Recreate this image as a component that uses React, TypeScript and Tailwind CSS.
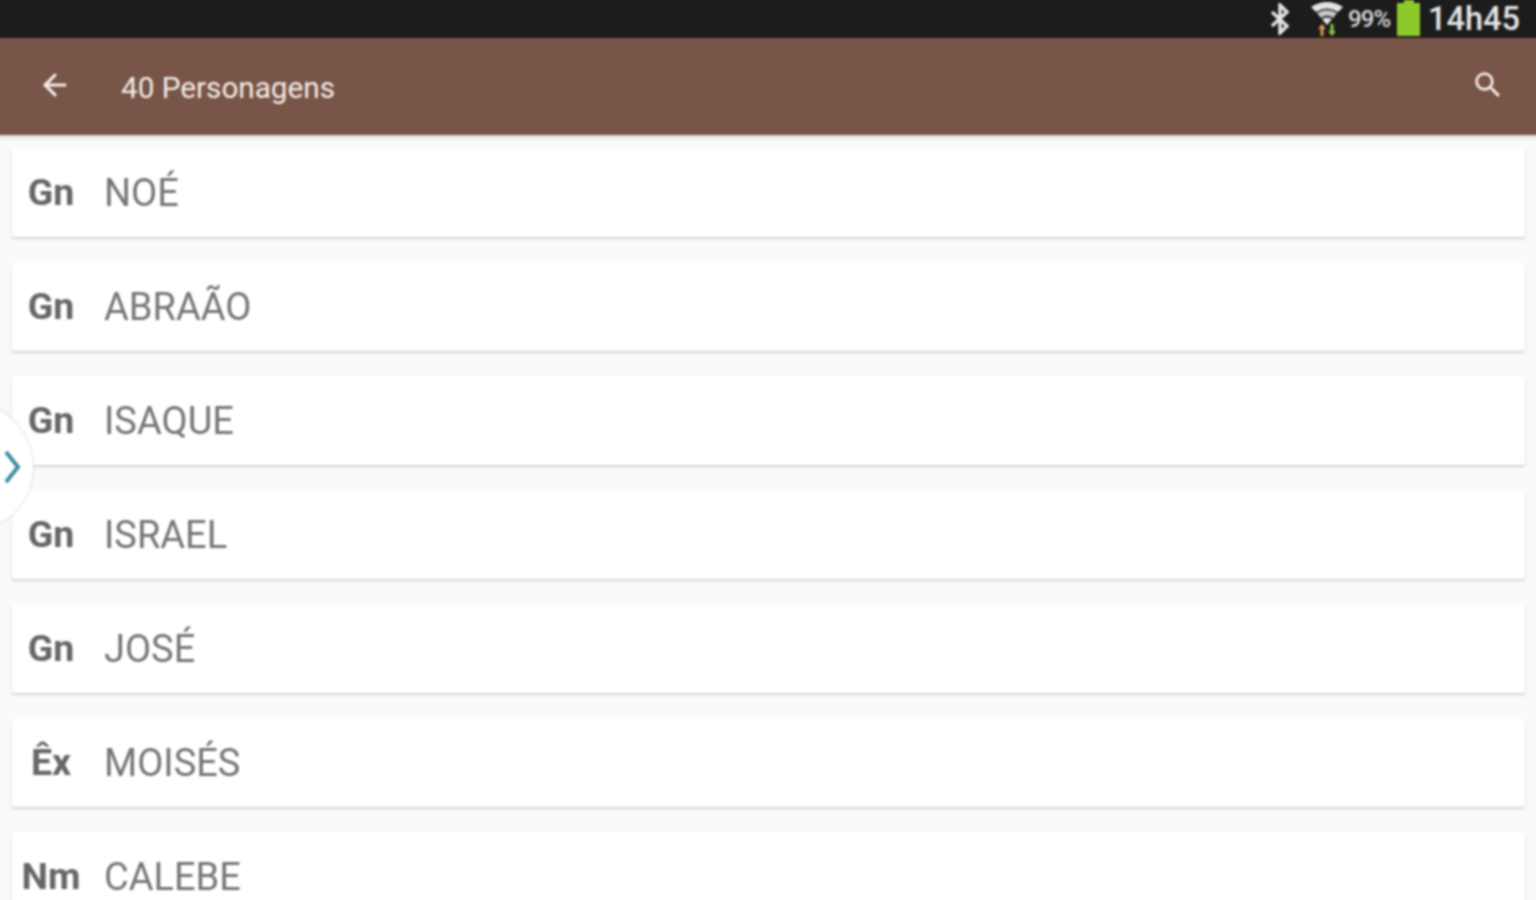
import { ArrowLeft } from "lucide-react"

const people = [
  { book: "Gn", name: "NOÉ" },
  { book: "Gn", name: "ABRAÃO" },
  { book: "Gn", name: "ISAQUE" },
  { book: "Gn", name: "ISRAEL" },
  { book: "Gn", name: "JOSÉ" },
  { book: "Êx", name: "MOISÉS" },
  { book: "Nm", name: "CALEBE" },
]

function Bluetooth() {
  return (
    <svg width="22" height="32" viewBox="0 0 22 32" fill="none" stroke="#e4e4e4" strokeWidth="3.4">
      <path d="M3 9l15 14-7 7V2l7 7L3 23" />
    </svg>
  )
}

function Wifi() {
  return (
    <svg width="32" height="36" viewBox="0 0 32 36">
      <path d="M0 6Q16-4 32 6L27 11Q16 4 5 11Z" fill="#e4e4e4" />
      <path d="M6 12Q16 6 26 12L22 17Q16 12 10 17Z" fill="#c8c8c8" />
      <path d="M11 18Q16 15 21 18L16 24Z" fill="#e4e4e4" />
      <path d="M11 23l4 5h-2.500v7h-3v-7H7Z" fill="#d99a4e" />
      <path d="M21 35l4-5h-2.500v-7h-3v7H17Z" fill="#8cc63f" />
    </svg>
  )
}

function SearchIcon() {
  return (
    <svg width="34" height="34" viewBox="0 0 24 24" fill="#f3ece6">
      <path d="M15.500 14h-.79l-.28-.27A6.471 6.471 0 0 0 16 9.500 6.500 6.500 0 1 0 9.500 16c1.610 0 3.090-.59 4.230-1.570l.27.28v.79l5 4.990L20.490 19l-4.990-5zm-6 0C7.010 14 5 11.990 5 9.500S7.010 5 9.500 5 14 7.010 14 9.500 11.990 14 9.500 14z" />
    </svg>
  )
}

export default function App() {
  return (
    <div className="h-[900px] w-[1536px] overflow-hidden bg-[#fafafa]">
      {/* the blur layer runs 4px past the window so its edges don't fade */}
      <div className="relative -ml-[4px] -mt-[4px] h-[908px] w-[1544px] bg-[#fafafa] font-['Roboto',sans-serif] blur-[1px]">
        <div className="flex h-[42px] items-center justify-end bg-[#1c1c1c] pr-[20px] pt-[4px]">
          <div className="mr-[3px]"><Bluetooth /></div>
          <div className="ml-[17px]"><Wifi /></div>
          <span className="ml-[5px] text-[24px] font-medium tracking-[-1px] text-[#d8d8d8]">99%</span>
          <div className="mb-[2px] ml-[7px] flex h-[36px] w-[23px] flex-col items-center">
            <div className="h-[3px] w-[10px] bg-[#8cc929]" />
            <div className="w-full flex-1 bg-[#8cc929]" />
          </div>
          <span className="ml-[8px] text-[32.500px] font-medium leading-none text-[#e6e6e6]">14h45</span>
        </div>

        <div className="flex h-[97px] items-center justify-between bg-[#795548] pl-[42px] pr-[35px] shadow-[0_3px_5px_rgba(0,0,0,0.12)]">
          <div className="flex items-center">
            <ArrowLeft size={34} strokeWidth={2.2} className="mb-[2px] text-[#f5efe9]" />
            <span className="ml-[49px] mt-[3px] text-[29.700px] text-[#f3ece6]">40 Personagens</span>
          </div>
          <div className="mb-[3px]"><SearchIcon /></div>
        </div>

        <div className="flex flex-col gap-[25px] pl-[16px] pr-[15px] pt-[13px]">
          {people.map((p) => (
            <div
              key={p.name}
              className="flex h-[89px] shrink-0 items-center rounded-[3px] bg-white shadow-[0_2px_3px_rgba(0,0,0,0.16)]"
            >
              <span className="w-[78px] text-center text-[37.500px] font-bold text-[#666666]">{p.book}</span>
              <span className="ml-[14px] pt-[2px] text-[38px] text-[#757575]">{p.name}</span>
            </div>
          ))}
        </div>

        <div className="absolute left-[-92px] top-[407px] flex h-[128px] w-[129px] items-center justify-end rounded-full bg-white pr-[12px] shadow-[0_0_3px_rgba(0,0,0,0.2)]">
          <svg width="18" height="36" viewBox="0 0 18 36" fill="none" stroke="#3f8fa3" strokeWidth="4">
            <path d="M3 3l12 15L3 33" />
          </svg>
        </div>
      </div>
    </div>
  )
}
